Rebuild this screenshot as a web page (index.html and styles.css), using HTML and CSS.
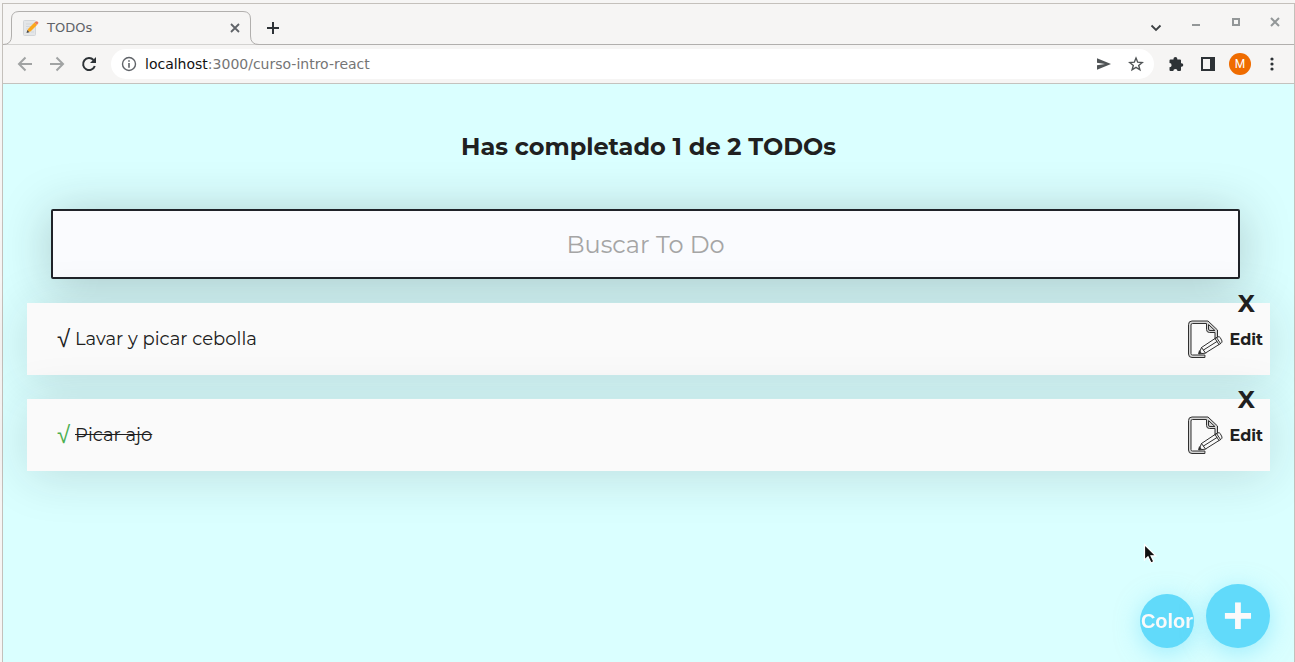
FILE: index.html
```html
<!DOCTYPE html>
<html lang="es">
<head>
<meta charset="utf-8">
<title>TODOs</title>
<meta name="viewport" content="width=device-width, initial-scale=1">
<link rel="stylesheet" href="styles.css">
</head>
<body>
<svg class="defs" aria-hidden="true">
  <symbol id="edit-icon" viewBox="0 0 36 40">
    <g fill="none" stroke="#303030" stroke-width="1" stroke-linejoin="round" stroke-linecap="round">
      <path d="M17.500 38.500H5Q1.500 38.500 1.500 35V5.500Q1.500 2 5 2H21L30.500 11V18L28 19.500V13.500H22.500Q19.500 13.500 19.500 10.500V4.500H5.500Q4 4.500 4 6V34.500Q4 36 5.500 36H17.500Z" fill="#d4d4d4"/>
      <path d="M21.500 6V10Q21.500 11.500 23 11.500H27.500Z"/>
      <path d="M12 34.500L14.500 28.500L28 19.500L32 25.500L18.500 34Z" fill="#fafafa"/>
      <path d="M14.500 28.500L18.500 34M16.500 31L30 22.500"/>
      <path d="M28 19.500L31 17.800Q32.500 17.500 33.200 18.500L35 22Q35.200 23.500 34 24.300L32 25.500M29.500 18.500L33.500 24.500"/>
      <path d="M12 34.500L14 33.800L12.700 32Z" fill="#202020"/>
    </g>
  </symbol>
</svg>
<div class="window">
  <header class="chrome">
    <div class="tabstrip">
      <div class="tab">
        <svg class="tab-outline" width="256" height="34" viewBox="0 0 256 34" aria-hidden="true"><path d="M0 33.500Q8.500 33.500 8.500 25V8Q8.500 .5 16 .5H240Q247.500 .5 247.500 8V25Q247.500 33.500 256 33.500V34H0Z"/></svg>
        <svg width="16" height="16" viewBox="0 0 16 16" aria-hidden="true"><rect x=".5" y=".5" width="12" height="15" rx="1" fill="#e4e6e8" stroke="#d3d6d9"/><path d="M3 4H10M3 6.500H8M3 9H5M8 12H11" stroke="#d3d6d9"/><path d="M4 12L5 9L11.500 2.500L14 5L7.500 11.500Z" fill="#fba81c"/><path d="M11.500 2.500L13 1.500Q14 1 15 2T15 3.500L14 5Z" fill="#ef7b57"/><path d="M3.500 13L4.300 10L6.500 12.200Z" fill="#4a4a4a"/></svg>
        <span class="tab-title">TODOs</span>
        <button class="tab-close" aria-label="Close tab"><svg width="10" height="10" viewBox="0 0 10 10"><path d="M1 1L9 9M9 1L1 9" stroke="#5f6368" stroke-width="1.800"/></svg></button>
      </div>
      <button class="new-tab" aria-label="New tab"><svg width="12" height="12" viewBox="0 0 12 12"><path d="M6 0V12M0 6H12" stroke="#2d3236" stroke-width="2"/></svg></button>
      <div class="controls">
        <button class="tabs-menu" aria-label="Search tabs"><svg width="12" height="8" viewBox="0 0 12 8"><path d="M1.500 1.500L6 6L10.500 1.500" fill="none" stroke="#3c4043" stroke-width="1.800"/></svg></button>
        <button aria-label="Minimize"><svg width="10" height="10" viewBox="0 0 10 10"><path d="M1 8H9" stroke="#939798" stroke-width="2"/></svg></button>
        <button aria-label="Maximize"><svg width="10" height="10" viewBox="0 0 10 10"><path d="M2 2H8V8H2Z" fill="none" stroke="#939798" stroke-width="2"/></svg></button>
        <button aria-label="Close window"><svg width="10" height="10" viewBox="0 0 10 10"><path d="M1 1L9 9M9 1L1 9" stroke="#939798" stroke-width="2"/></svg></button>
      </div>
    </div>
    <div class="toolbar">
      <button class="tool" aria-label="Back"><svg width="16" height="16" viewBox="0 0 16 16"><path d="M15 8H2M8.500 1.500L2 8L8.500 14.500" fill="none" stroke="#a1a3a3" stroke-width="2"/></svg></button>
      <button class="tool" aria-label="Forward"><svg width="16" height="16" viewBox="0 0 16 16"><path d="M1 8H14M7.500 1.500L14 8L7.500 14.500" fill="none" stroke="#a1a3a3" stroke-width="2"/></svg></button>
      <button class="tool" aria-label="Reload"><svg width="16" height="16" viewBox="0 0 16 16"><path d="M13.800 10A6 6 0 1 1 12.500 4" fill="none" stroke="#2d3236" stroke-width="2"/><path d="M15 1V7H9Z" fill="#2d3236"/></svg></button>
      <div class="address">
        <svg width="16" height="16" viewBox="0 0 16 16" aria-hidden="true"><circle cx="8" cy="8" r="6.500" fill="none" stroke="#5f6368" stroke-width="1.400"/><path d="M8 7V11.800M8 4.200V5.800" stroke="#5f6368" stroke-width="1.600"/></svg>
        <span class="url"><b>localhost</b>:3000/curso-intro-react</span>
        <button class="tool" aria-label="Share"><svg width="16" height="16" viewBox="0 0 16 16"><path d="M1 2.200L15 8L1 13.800V9.300L9 8L1 6.700Z" fill="#505456"/></svg></button>
        <button class="tool" aria-label="Bookmark"><svg width="16" height="16" viewBox="0 0 16 16"><path d="M8 2L9.700 6.200L14.200 6.500L10.700 9.400L11.900 13.800L8 11.400L4.100 13.800L5.300 9.400L1.800 6.500L6.300 6.200Z" fill="none" stroke="#505456" stroke-width="1.400"/></svg></button>
      </div>
      <button class="tool" aria-label="Extensions"><svg width="16" height="16" viewBox="0 0 16 16"><path d="M1.500 4.500Q1.500 3.500 2.500 3.500H5.500V2.800A1.900 1.900 0 0 1 9.300 2.800V3.500H12Q13 3.500 13 4.500V7.200H13.500A1.800 1.800 0 0 1 13.500 10.800H13V14Q13 15 12 15H9.500A2.100 2.100 0 0 0 5.300 15H2.500Q1.500 15 1.500 14V11.300A2.100 2.100 0 0 0 1.500 7.100Z" fill="#2d3236"/></svg></button>
      <button class="tool" aria-label="Side panel"><svg width="14" height="14" viewBox="0 0 14 14"><path d="M0 0H14V14H0ZM2 2V12H9V2Z" fill="#2d3236" fill-rule="evenodd"/></svg></button>
      <button class="tool" aria-label="Profile"><span class="avatar">M</span></button>
      <button class="tool" aria-label="Menu"><svg width="4" height="14" viewBox="0 0 4 14"><g fill="#2d3236"><circle cx="2" cy="2" r="1.600"/><circle cx="2" cy="7" r="1.600"/><circle cx="2" cy="12" r="1.600"/></g></svg></button>
    </div>
  </header>
  <main class="page">
    <h1 class="title">Has completado 1 de 2 TODOs</h1>
    <input class="search" type="text" placeholder="Buscar To Do" aria-label="Buscar To Do">
    <ul class="list">
      <li class="item">
        <button class="check" aria-label="Completar">√</button>
        <p class="text">Lavar y picar cebolla</p>
        <button class="edit"><svg width="36" height="40"><use href="#edit-icon"/></svg>Edit</button>
        <button class="delete" aria-label="Eliminar">X</button>
      </li>
      <li class="item">
        <button class="check check-done" aria-label="Completar">√</button>
        <p class="text text-done">Picar ajo</p>
        <button class="edit"><svg width="36" height="40"><use href="#edit-icon"/></svg>Edit</button>
        <button class="delete" aria-label="Eliminar">X</button>
      </li>
    </ul>
    <div class="actions">
      <button class="color">Color</button>
      <button class="add" aria-label="Agregar">+</button>
    </div>
    <svg class="cursor" width="14" height="22" viewBox="0 0 14 22" aria-hidden="true"><path d="M1.500 1.500V17L5 13.800L8 20L10.800 18.500L8 12.800H12.800Z" fill="#111" stroke="#fff" stroke-width="1.200"/></svg>
  </main>
</div>
</body>
</html>
```
FILE: styles.css
```css
* { box-sizing: border-box; }
body {
  margin: 0;
  background: #f6f5f4;
  color: #202020;
  font-family: Montserrat, Inter, sans-serif;
}
button {
  padding: 0;
  border: 0;
  background: none;
  color: inherit;
  font-family: inherit;
}
.defs { position: absolute; width: 0; height: 0; }
.window {
  display: flex;
  flex-direction: column;
  min-height: calc(100vh - 3px);
  margin: 3px 0 0 2px;
  border: 1px solid #c4c0bb;
  border-bottom: 0;
}
.chrome {
  background: #f6f5f4;
  border-bottom: 1px solid #c4c2be;
  font-family: "DejaVu Sans", sans-serif;
}
.tabstrip {
  display: flex;
  height: 41px;
  padding-top: 7px;
  border-bottom: 1px solid #b1afad;
}
.tab {
  position: relative;
  display: flex;
  align-items: center;
  width: 248px;
  height: 34px;
  padding: 0 10px 0 20px;
}
.tab-outline {
  position: absolute;
  left: 0;
  top: 0;
  fill: #f6f5f4;
  stroke: #b1afad;
}
.tab > :not(.tab-outline) { position: relative; }
.tab-title {
  flex: 1;
  padding-left: 8px;
  color: #5f6368;
  font-size: 13px;
  line-height: 16px;
}
.tab-close { display: grid; place-items: center; width: 12px; height: 16px; }
.new-tab { display: grid; place-items: center; width: 44px; height: 34px; }
.controls { display: flex; margin-left: auto; }
.controls button { display: grid; place-items: center; width: 40px; height: 22px; }
.controls .tabs-menu { height: 34px; }
.controls button:last-child { width: 38px; }
.toolbar {
  display: flex;
  align-items: center;
  height: 38px;
  padding: 0 6px;
}
.tool { display: grid; place-items: center; flex: none; width: 32px; height: 30px; }
.address {
  display: flex;
  flex: 1;
  align-items: center;
  height: 30px;
  margin: 0 6px;
  padding: 0 2px 0 10px;
  border-radius: 15px;
  background: #fff;
}
.url { flex: 1; padding-left: 8px; color: #757575; font-size: 14px; }
.url b { color: #111; font-weight: 400; }
.avatar {
  width: 22px;
  height: 22px;
  border-radius: 50%;
  background: #ef6c00;
  color: #fff;
  font: 12px/22px Roboto, sans-serif;
}
.page {
  position: relative;
  flex: 1;
  display: flex;
  flex-direction: column;
  background: #daffff;
}
.title {
  margin: 0;
  padding: 48px 0;
  font-size: 24px;
  line-height: 29px;
  text-align: center;
}
.search {
  height: 70px;
  margin: 0 54px 0 48px;
  padding: 0 24px;
  border: 2px solid #202329;
  border-radius: 2px;
  background: #fafbfe;
  box-shadow: 0 5px 50px rgba(32, 35, 41, .25);
  color: #1e1e1f;
  font: 24px Montserrat, Inter, sans-serif;
  text-align: center;
}
.search::placeholder { color: #a5a5a5; opacity: 1; }
.list { margin: 0; padding: 0 24px; list-style: none; }
.item {
  position: relative;
  display: flex;
  align-items: center;
  height: 72px;
  margin-top: 24px;
  padding: 0 7px 0 28px;
  background: #fafafa;
  box-shadow: 0 5px 50px rgba(32, 35, 41, .15);
}
.check {
  width: 20px;
  padding-left: 2px;
  font-family: "Liberation Sans", Arial, sans-serif;
  font-size: 24px;
  line-height: 24px;
  text-align: left;
}
.check-done { color: #4caf50; }
.text { flex: 1; margin: 0; font-size: 18px; }
.text-done { text-decoration: line-through; }
.edit {
  display: flex;
  align-items: center;
  gap: 6px;
  font-size: 16px;
  font-weight: 700;
}
.delete {
  position: absolute;
  top: -13px;
  right: 15px;
  font-size: 24px;
  font-weight: 700;
  line-height: 28px;
}
.actions {
  position: fixed;
  right: 25px;
  bottom: 14px;
  display: flex;
  align-items: flex-end;
  gap: 12px;
}
.actions button {
  border-radius: 50%;
  background: #61dafa;
  box-shadow: 0 5px 25px rgba(97, 218, 250, .5);
  color: #fafafa;
  font-family: "Liberation Sans", Arial, sans-serif;
  font-weight: 700;
}
.color { width: 54px; height: 54px; font-size: 20px; }
.add { width: 64px; height: 64px; font-size: 52px; line-height: 60px; padding-bottom: 3px; }
.cursor { position: absolute; right: 137px; bottom: 97px; }
```
